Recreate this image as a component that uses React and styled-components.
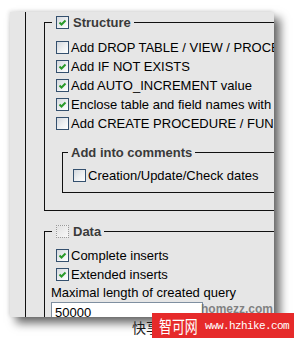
import React from 'react';
import styled, { createGlobalStyle } from 'styled-components';

const Global = createGlobalStyle`
  html, body { margin: 0; padding: 0; background: #fff; }
  body { font-family: "Liberation Sans", Arial, sans-serif; }
`;

const Stage = styled.div`
  position: relative;
  width: 294px;
  height: 338px;
  overflow: hidden;
  padding: 12px 0 0 10px;
  box-sizing: border-box;
  background: #fff;
`;

const Window = styled.div`
  width: 264px;
  height: 305px;
  background: #e6e6e6;
  box-shadow: 6px 6px 9px rgba(0, 0, 0, 0.6), -1px -1px 4px rgba(0, 0, 0, 0.12);
  overflow: hidden;
  display: flex;
`;

const Frame = styled.div`
  flex: none;
  width: 290px;
  margin-left: 15px;
  border-left: 1px solid #111;
  padding-left: 18px;
`;

const Group = styled.fieldset`
  box-sizing: border-box;
  min-width: 0;
  width: ${p => p.$w}px;
  margin: ${p => p.$mt}px 0 0 ${p => p.$ml || 0}px;
  padding: ${p => p.$pad};
  border: 1px solid #111;
`;

const Legend = styled.legend`
  display: flex;
  align-items: center;
  gap: 4px;
  height: 17px;
  padding: ${p => p.$pad || '0 3px 0 4px'};
  font-size: 13px;
  font-weight: bold;
  color: #3a3a3a;
  white-space: nowrap;
`;

const Row = styled.div`
  display: flex;
  align-items: center;
  gap: 2px;
  height: 19px;
  margin-left: ${p => p.$ml}px;
  font-size: 13px;
  color: #000;
  white-space: nowrap;
`;

const Box = styled.span`
  flex: none;
  box-sizing: border-box;
  width: 13px;
  height: 13px;
  display: flex;
  align-items: center;
  justify-content: center;
  border: 1px ${p => (p.$dotted ? 'dotted #9a9a9a' : 'solid #34506e')};
  background: ${p =>
    p.$dotted
      ? 'linear-gradient(135deg, #e2e2e2, #f7f7f7)'
      : 'linear-gradient(135deg, #d3d8de 0%, #eef0f2 55%, #ffffff 100%)'};
`;

const Label = styled.div`
  margin-left: -1px;
  height: 17px;
  line-height: 17px;
  font-size: 13px;
  color: #000;
  white-space: nowrap;
`;

const Field = styled.input`
  display: block;
  box-sizing: border-box;
  width: 152px;
  height: 20px;
  margin: 1px 0 0 -1px;
  padding: 0 3px;
  border: 1px solid #7f8fa0;
  background: #fff;
  font-family: "Liberation Sans", Arial, sans-serif;
  font-size: 13px;
  color: #000;
  outline: none;
`;

const Mark = styled.div`
  position: absolute;
  left: ${p => p.$x}px;
  top: ${p => p.$y}px;
  white-space: nowrap;
`;

const SiteMark = styled(Mark)`
  font-family: "Liberation Sans", Arial, sans-serif;
  font-weight: bold;
  font-size: 12px;
  line-height: 14px;
  color: rgba(110, 110, 110, 0.85);
`;

const CjkMark = styled(Mark)`
  font-family: "Noto Sans CJK SC", sans-serif;
  font-size: 14px;
  line-height: 16px;
  color: #1a1a1a;
`;

const Banner = styled.div`
  position: absolute;
  left: 152px;
  top: 313px;
  right: 0;
  bottom: 0;
  background: #e62a2a;
  display: flex;
  align-items: center;
  padding-left: 7px;
  color: #fff;
  white-space: nowrap;
`;

const BannerName = styled.span`
  display: inline-block;
  flex: none;
  width: 46px;
  white-space: nowrap;
  font-family: "Noto Sans CJK SC", sans-serif;
  font-size: 17px;
  line-height: 20px;
  transform: scaleX(0.76);
  transform-origin: left center;
`;

const BannerUrl = styled.span`
  flex: none;
  font-family: "Liberation Mono", monospace;
  font-size: 11px;
  letter-spacing: -0.6px;
`;

function Check({ checked, dotted }) {
  return (
    <Box $dotted={dotted}>
      {checked && (
        <svg width="9" height="9" viewBox="0 0 9 9">
          <polyline points="1.5,4.5 3.5,6.5 7.5,2.5" fill="none" stroke="#2a9a2a" strokeWidth="2" />
        </svg>
      )}
    </Box>
  );
}

const structureRows = [
  ['Add DROP TABLE / VIEW / PROCEDURE / FUNCTION', false],
  ['Add IF NOT EXISTS', true],
  ['Add AUTO_INCREMENT value', true],
  ['Enclose table and field names with backquotes', true],
  ['Add CREATE PROCEDURE / FUNCTION', false],
];

export default function App() {
  return (
    <>
      <Global />
      <Stage>
        <Window>
          <Frame>
            <Group $w={260} $mt={2} $pad="7px 0 17px 7px">
              <Legend>
                <Check checked />
                Structure
              </Legend>
              {structureRows.map(([text, on]) => (
                <Row key={text} $ml={4}>
                  <Check checked={on} />
                  {text}
                </Row>
              ))}
              <Group $w={240} $mt={11} $ml={10} $pad="5px 0 7px 5px">
                <Legend $pad="0 3px">Add into comments</Legend>
                <Row $ml={5}>
                  <Check />
                  Creation/Update/Check dates
                </Row>
              </Group>
            </Group>
            <Group $w={260} $mt={12} $pad="6px 0 10px 7px">
              <Legend>
                <Check dotted />
                Data
              </Legend>
              <Row $ml={4}>
                <Check checked />
                Complete inserts
              </Row>
              <Row $ml={4}>
                <Check checked />
                Extended inserts
              </Row>
              <Label>Maximal length of created query</Label>
              <Field readOnly value="50000" />
            </Group>
          </Frame>
        </Window>
        <SiteMark $x={201} $y={302}>homezz.com</SiteMark>
        <CjkMark $x={132} $y={319}>快享</CjkMark>
        <Banner>
          <BannerName>智可网</BannerName>
          <BannerUrl>www.hzhike.com</BannerUrl>
        </Banner>
      </Stage>
    </>
  );
}
